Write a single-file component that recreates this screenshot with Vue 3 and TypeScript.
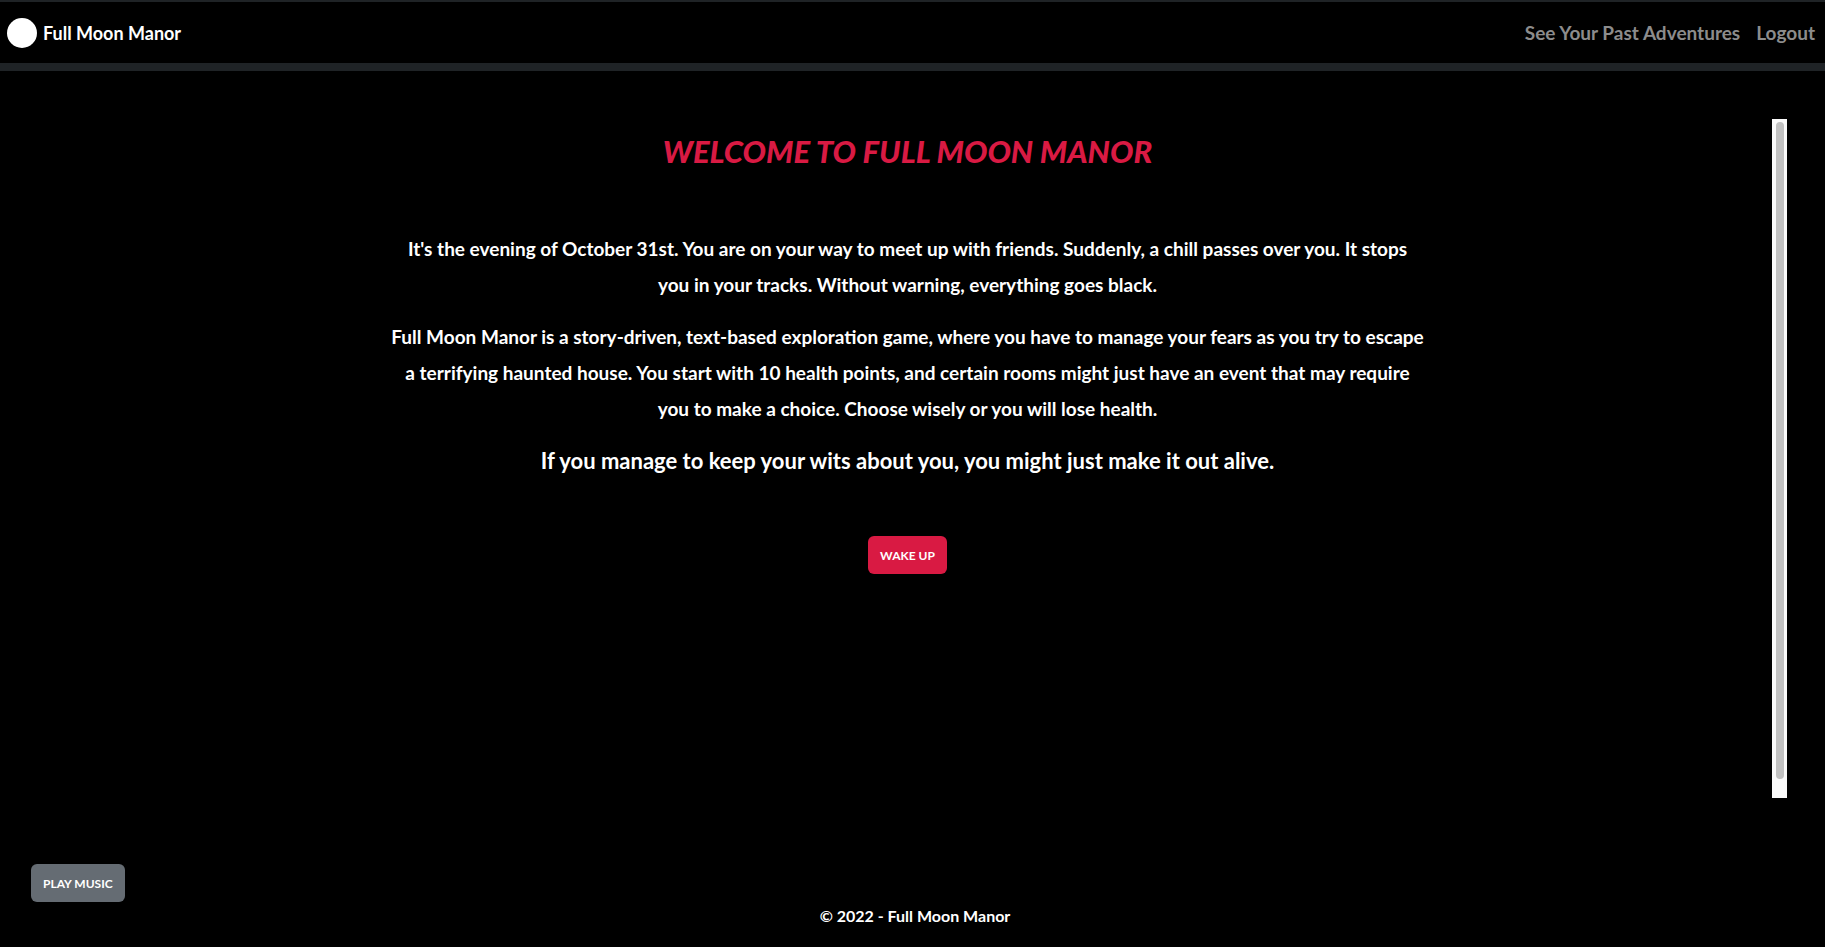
<script setup lang="ts">
import { ref } from 'vue'

interface NavLink {
  label: string
  href: string
}

const siteName = 'Full Moon Manor'
const links: NavLink[] = [
  { label: 'See Your Past Adventures', href: '#adventures' },
  { label: 'Logout', href: '#logout' },
]
const intro: string[][] = [
  [
    "It's the evening of October 31st. You are on your way to meet up with friends. Suddenly, a chill passes over you. It stops",
    'you in your tracks. Without warning, everything goes black.',
  ],
  [
    'Full Moon Manor is a story-driven, text-based exploration game, where you have to manage your fears as you try to escape',
    'a terrifying haunted house. You start with 10 health points, and certain rooms might just have an event that may require',
    'you to make a choice. Choose wisely or you will lose health.',
  ],
]
const playing = ref(false)
</script>

<template>
  <div class="page">
    <header class="navbar">
      <a class="brand" href="#home">
        <svg class="moon" viewBox="0 0 30 30" aria-hidden="true"><circle cx="15" cy="15" r="15" /></svg>
        <span>{{ siteName }}</span>
      </a>
      <nav class="links">
        <a v-for="link in links" :key="link.label" :href="link.href">{{ link.label }}</a>
      </nav>
    </header>

    <main class="stage">
      <section class="story">
        <h1>WELCOME TO FULL MOON MANOR</h1>
        <p v-for="(lines, i) in intro" :key="i">
          <template v-for="(line, j) in lines" :key="j">{{ line }}<br v-if="j < lines.length - 1" /></template>
        </p>
        <p class="closing">If you manage to keep your wits about you, you might just make it out alive.</p>
        <button class="btn wake" type="button">WAKE UP</button>
      </section>
      <div class="track" aria-hidden="true"><div class="thumb"></div></div>
    </main>

    <div class="music">
      <button class="btn play" type="button" :aria-pressed="playing" @click="playing = !playing">PLAY MUSIC</button>
    </div>
    <footer>© 2022 - {{ siteName }}</footer>
  </div>
</template>

<style>
body {
  margin: 0;
  background: #000;
}
</style>

<style scoped>
.page {
  box-sizing: border-box;
  min-height: 100vh;
  display: flex;
  flex-direction: column;
  background: #000;
  color: #fff;
  font-family: Lato, "Liberation Sans", sans-serif;
  font-weight: 700;
}
.navbar {
  display: flex;
  align-items: center;
  justify-content: space-between;
  min-height: 61px;
  padding: 0 10px 0 7px;
  border-top: 2px solid #1f2326;
  border-bottom: 8px solid #1f2326;
}
a {
  color: inherit;
  text-decoration: none;
}
.brand {
  display: flex;
  align-items: center;
  gap: 6px;
  font-size: 18px;
}
.moon {
  width: 30px;
  height: 30px;
  fill: #fff;
}
.links {
  display: flex;
  gap: 16px;
  color: #8c8c8c;
  font-size: 19px;
}
.stage {
  flex: 1;
  display: flex;
  margin: 48px 38px 0 43px;
}
.story {
  flex: 1;
  display: flex;
  flex-direction: column;
  align-items: center;
  text-align: center;
}
h1 {
  margin: 8px 0 56px;
  color: #d91a43;
  font-size: 31px;
  line-height: 48px;
  font-style: italic;
  font-weight: 900;
}
p {
  margin: 0 0 16px;
  font-size: 19px;
  line-height: 36px;
}
.closing {
  margin-bottom: 57px;
  font-size: 22px;
}
.btn {
  height: 38px;
  padding: 0 12px;
  border: 0;
  border-radius: 6px;
  color: #fff;
  font-family: inherit;
  font-size: 12px;
  font-weight: 700;
  cursor: pointer;
}
.wake {
  background: #d91a43;
}
.play {
  background: #656c73;
}
.track {
  box-sizing: border-box;
  width: 15px;
  padding: 3px 3px 19px 4px;
  background: #fafafa;
}
.thumb {
  height: 100%;
  border-radius: 4px;
  background: #c1c1c1;
}
.music {
  margin: 66px 31px 0;
}
footer {
  padding: 0 0 17px 5px;
  text-align: center;
  font-size: 16px;
  line-height: 28px;
}
</style>
